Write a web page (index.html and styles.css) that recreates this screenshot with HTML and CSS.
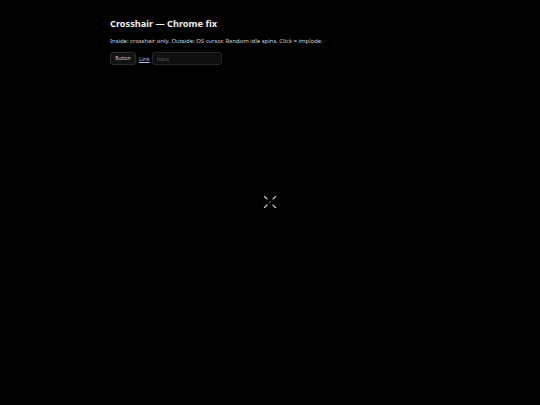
FILE: index.html
```html
<!DOCTYPE html>
<html>
<head>
<meta charset="utf-8">
<link rel="stylesheet" href="styles.css">
</head>
<body>
<main class="wrap">
  <h1 class="title">Crosshair — Chrome fix</h1>
  <p class="desc">Inside: crosshair only. Outside: OS cursor. Random idle spins. Click = implode.</p>
  <div class="controls">
    <button class="btn">Button</button>
    <a class="link" href="#">Link</a>
    <input class="field" placeholder="Input">
  </div>
</main>
<svg class="cross" width="14" height="14" viewBox="0 0 14 14">
  <g stroke="#d8d8d8" stroke-width="1.2" stroke-linecap="square">
    <line x1="1.5" y1="1.5" x2="4" y2="4"/>
    <line x1="12.5" y1="1.5" x2="10" y2="4"/>
    <line x1="1.5" y1="12.5" x2="4" y2="10"/>
    <line x1="12.5" y1="12.5" x2="10" y2="10"/>
  </g>
  <rect x="6" y="6.5" width="2" height="1" fill="#888"/>
</svg>
</body>
</html>
```
FILE: styles.css
```css
html, body {
  margin: 0;
  padding: 0;
  background: #000;
  height: 100%;
}
body {
  font-family: "Noto Sans", "Open Sans", sans-serif;
  color: #e6e6e6;
}
.wrap {
  width: 320px;
  margin: 0 auto;
  padding-top: 16px;
}
.title {
  font-size: 9.2px;
  font-weight: 700;
  margin: 0;
  line-height: 15px;
  color: #f2f2f2;
}
.desc {
  font-size: 5.9px;
  margin: 6px 0 0;
  line-height: 9px;
  color: #d6d6d6;
}
.controls {
  display: flex;
  align-items: center;
  margin-top: 6px;
}
.btn {
  font-family: inherit;
  font-size: 4.8px;
  color: #cfcfcf;
  background: #121212;
  border: 1px solid #2a2a2a;
  border-radius: 3px;
  height: 13px;
  width: 26px;
  padding: 0;
  line-height: 11px;
}
.link {
  font-size: 5.6px;
  color: #9dbcff;
  text-decoration: underline;
  margin: 0 2px 0 3px;
}
.field {
  font-family: inherit;
  font-size: 4.8px;
  width: 70px;
  height: 13px;
  box-sizing: border-box;
  background: #0f0f0f;
  border: 1px solid #262626;
  border-radius: 3px;
  color: #ccc;
  padding: 0 4px;
}
.field::placeholder {
  color: #5c5c5c;
}
.cross {
  position: absolute;
  left: 263px;
  top: 195px;
}
```
